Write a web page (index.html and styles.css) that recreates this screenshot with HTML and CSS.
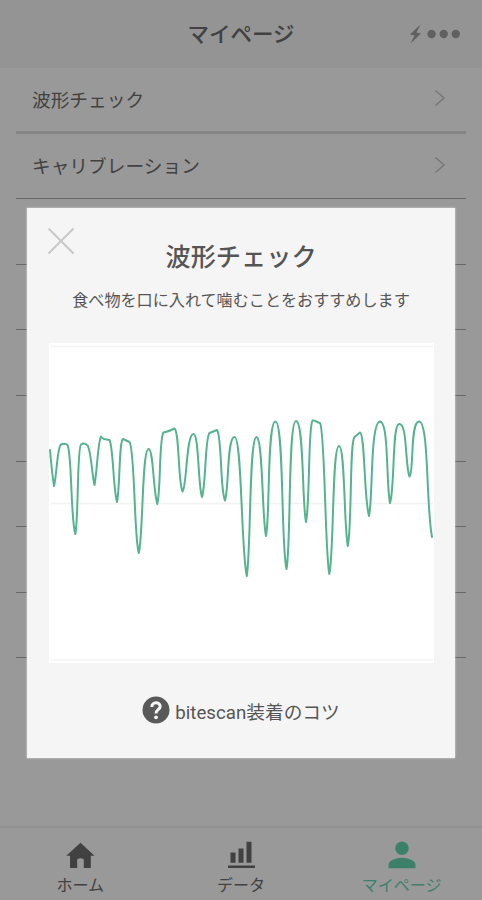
FILE: index.html
```html
<!DOCTYPE html>
<html lang="ja">
<head>
<meta charset="utf-8">
<title>マイページ</title>
<link rel="stylesheet" href="styles.css">
</head>
<body>
<div class="app">
  <header class="header">
    <h1 class="title">マイページ</h1>
    <svg class="status" width="54" height="24" viewBox="0 0 54 24">
      <path d="M12.500 2.500 2 12.500l4.500 1-4 8L13 11.500l-4.500-1z"/>
      <circle cx="23.600" cy="12" r="4.200"/><circle cx="35.700" cy="12" r="4.200"/><circle cx="47.800" cy="12" r="4.200"/>
    </svg>
  </header>
  <main class="list">
    <div class="row first"><span>波形チェック</span><svg class="chev" width="12" height="18" viewBox="0 0 12 18"><path d="M1.500 1.500 10 9l-8.500 7.500"/></svg></div>
    <div class="row"><span>キャリブレーション</span><svg class="chev" width="12" height="18" viewBox="0 0 12 18"><path d="M1.500 1.500 10 9l-8.500 7.500"/></svg></div>
    <div class="row"></div><div class="row"></div><div class="row"></div><div class="row"></div><div class="row"></div><div class="row"></div><div class="row"></div>
  </main>
  <nav class="tabs">
    <div class="tab"><svg width="30" height="30" viewBox="0 0 30 30"><path d="M15.500 2.800 1.300 15.800H5V28h7.200V20q0-1.800 3.300-1.800t3.300 1.800v8h7V15.800h3.700z"/></svg><span>ホーム</span></div>
    <div class="tab"><svg width="30" height="30" viewBox="0 0 30 30"><path d="M4.500 12.500h5v10.300h-5zM12.500 8.500h5v14.300h-5zM20.500 1.700h5v21.100h-5zM2 25.500h27v2.500H2z"/></svg><span>データ</span></div>
    <div class="tab active"><svg width="30" height="30" viewBox="0 0 30 30"><circle cx="15" cy="8.300" r="6.700"/><path d="M1.500 28.300v-3.500c0-4 7-7 13.500-7s13.500 3 13.500 7v3.500z"/></svg><span>マイページ</span></div>
  </nav>
</div>
<div class="overlay">
  <section class="modal">
    <svg class="close" width="28" height="28" viewBox="0 0 28 28"><path d="M1.500 1.500l25 25M26.500 1.500l-25 25"/></svg>
    <h2 class="heading">波形チェック</h2>
    <p class="lead">食べ物を口に入れて噛むことをおすすめします</p>
    <svg class="chart" width="385" height="320" viewBox="49 343 385 320">
      <path class="grid" d="M51 346.500H433M51 503.500H433M51 660H433"/>
      <path class="wave" d="M50 450C51 462 52.500 476 54 486C57 474 57 448 61 444.500Q64 443 67.500 445C72 453 70.500 518 75.300 534C78.500 522 77 448 81 444.500Q84.500 442 88 446C91.500 455 92 475 94.500 485C97 472 98 441 101 436.500Q102.500 438.500 104 439L109.500 440C113.500 448 113 488 117 502C120 488 119 441 123 439L129.500 442C135 450 134 538 138.800 553C143 538 142 449 148.500 449C153.500 449 153 490 157.300 504C161 488 159 438 163.500 432.500Q169 431.500 174.500 428.500C179.500 432 178 482 182.500 491.500C187 487 186 434 193.500 434C199 434 198 486 202 497C206 485 205 437 209.500 433L217 430C222 436 220 490 225 500.500C229 488 227 437 234.500 437C242 437 241 550 246.800 576C251 550 249 438 256.500 437C263 438 262 518 266 536C270 518 267 422 275.500 421.500C284 422 281 547 286.500 569C291 547 288 421 296 421C304 421 302 503 306 522C310 503 308 428 312.500 420.500Q315 420 317 422L320 423C325 430 325 553 329.300 574C334 554 332 446 339 446C345 446 344 527 347.800 546C352 527 349.500 442 354.500 437L360 432.500C365 434 364 499 369 516C373 499 370 423 380 421.500C389 422 386 484 390 503C395 487 392 425 399 424C407.500 422 405 466 409.500 476.500C414 472 410 422 419 421.500C429 421 426 506 432 537"/>
    </svg>
    <div class="tip">
      <svg width="28" height="28" viewBox="0 0 28 28"><circle cx="14" cy="14" r="13.500"/><path class="q" d="M9.800 11C9.800 5.500 18.200 5.500 18.200 10.500C18.200 13.500 14 13.500 14 17.500"/><circle class="dot" cx="14" cy="21.300" r="1.900"/></svg>
      <span>bitescan装着のコツ</span>
    </div>
  </section>
</div>
</body>
</html>
```

FILE: styles.css
```css
* { box-sizing: border-box; }
body { margin: 0; font-family: Roboto, "Noto Sans CJK JP", sans-serif; color: #414141; }
h1, h2, p { margin: 0; }
svg { display: block; flex: none; }
.app { height: 900px; display: flex; flex-direction: column; background: #999; }
.header { height: 68px; background: #949494; display: grid; grid-template-columns: 1fr auto 1fr; align-items: center; padding-right: 20px; }
.title { grid-column: 2; padding: 2px 0 0 20px; font-size: 21.500px; line-height: 30px; font-weight: 500; }
.status { justify-self: end; fill: #606060; }
.list { flex: 1; padding: 0 16px; }
.row { height: 65.600px; border-bottom: 1.500px solid #686868; padding: 0 20px 2px 16px; display: flex; align-items: center; justify-content: space-between; font-size: 18.700px; }
.first { border-bottom: 3px solid #858585; }
.chev { fill: none; stroke: #777; stroke-width: 1.500; }
.tabs { height: 74px; border-top: 2px solid #919191; display: grid; grid-template-columns: repeat(3, 1fr); }
.tab { display: flex; flex-direction: column; align-items: center; padding-top: 12px; font-size: 16px; line-height: 31px; fill: #414141; }
.active { color: #3f806a; fill: #3d806a; }
.overlay { position: absolute; inset: 0; padding: 208px 27px 0; }
.modal { position: relative; width: 428px; height: 549.500px; background: #f5f5f5; box-shadow: 0 0 2px #ddd; display: flex; flex-direction: column; align-items: center; color: #555; }
.close { position: absolute; left: 20px; top: 19px; fill: none; stroke: #c8c8c8; stroke-width: 2; }
.heading { margin-top: 32px; font-size: 25.200px; line-height: 36px; font-weight: 500; }
.lead { margin-top: 13px; font-size: 16.100px; line-height: 24px; }
.chart { margin-top: 30px; background: #fff; }
.grid { fill: none; stroke: #f3f3f3; stroke-width: 1.500; }
.wave { fill: none; stroke: #55b38f; stroke-width: 2; stroke-linejoin: round; stroke-linecap: round; }
.tip { margin-top: 31px; height: 32px; display: flex; align-items: center; gap: 5px; font-size: 18.700px; fill: #595959; }
.q { fill: none; stroke: #f5f5f5; stroke-width: 3; }
.dot { fill: #f5f5f5; }
```
